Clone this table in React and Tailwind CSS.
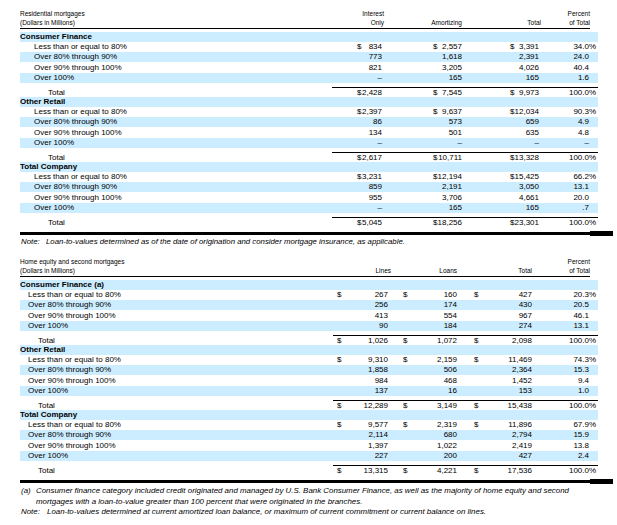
const font = "font-['Liberation_Sans',Arial,sans-serif]";

const residential = {
  title: ["Residential mortgages", "(Dollars in Millions)"],
  labelW: "w-[312px]",
  rowIndent: "pl-[14px]",
  totalIndent: "pl-[28px]",
  heads: [
    { cls: "w-[312px]", lines: [] },
    { cls: "w-[52px]", lines: ["Interest", "Only"] },
    { cls: "w-[78px]", lines: ["Amortizing"] },
    { cls: "w-[79px]", lines: ["Total"] },
    { cls: "w-[49px]", lines: ["Percent", "of Total"] },
  ],
  cols: ["w-[50px] pl-[25px]", "w-[80px] pl-[51px]", "w-[77px] pl-[48px]"],
  pctW: "w-[50px]",
  sections: [
    {
      name: "Consumer Finance",
      rows: [
        ["Less than or equal to 80%", "834", "2,557", "3,391", "34.0"],
        ["Over 80% through 90%", "773", "1,618", "2,391", "24.0"],
        ["Over 90% through 100%", "821", "3,205", "4,026", "40.4"],
        ["Over 100%", "–", "165", "165", "1.6"],
      ],
      total: ["2,428", "7,545", "9,973", "100.0"],
    },
    {
      name: "Other Retail",
      rows: [
        ["Less than or equal to 80%", "2,397", "9,637", "12,034", "90.3"],
        ["Over 80% through 90%", "86", "573", "659", "4.9"],
        ["Over 90% through 100%", "134", "501", "635", "4.8"],
        ["Over 100%", "–", "–", "–", "–"],
      ],
      total: ["2,617", "10,711", "13,328", "100.0"],
    },
    {
      name: "Total Company",
      rows: [
        ["Less than or equal to 80%", "3,231", "12,194", "15,425", "66.2"],
        ["Over 80% through 90%", "859", "2,191", "3,050", "13.1"],
        ["Over 90% through 100%", "955", "3,706", "4,661", "20.0"],
        ["Over 100%", "–", "165", "165", ".7"],
      ],
      total: ["5,045", "18,256", "23,301", "100.0"],
    },
  ],
};

const homeEquity = {
  title: ["Home equity and second mortgages", "(Dollars in Millions)"],
  labelW: "w-[313px]",
  rowIndent: "pl-[8px]",
  totalIndent: "pl-[18px]",
  heads: [
    { cls: "w-[313px]", lines: [] },
    { cls: "w-[58px]", lines: ["Lines"] },
    { cls: "w-[66px]", lines: ["Loans"] },
    { cls: "w-[75px]", lines: ["Total"] },
    { cls: "w-[58px]", lines: ["Percent", "of Total"] },
  ],
  cols: ["w-[55px] pl-[4px]", "w-[69px] pl-[15px]", "w-[75px] pl-[17px]"],
  pctW: "w-[57px]",
  sections: [
    {
      name: "Consumer Finance (a)",
      rows: [
        ["Less than or equal to 80%", "267", "160", "427", "20.3"],
        ["Over 80% through 90%", "256", "174", "430", "20.5"],
        ["Over 90% through 100%", "413", "554", "967", "46.1"],
        ["Over 100%", "90", "184", "274", "13.1"],
      ],
      total: ["1,026", "1,072", "2,098", "100.0"],
    },
    {
      name: "Other Retail",
      rows: [
        ["Less than or equal to 80%", "9,310", "2,159", "11,469", "74.3"],
        ["Over 80% through 90%", "1,858", "506", "2,364", "15.3"],
        ["Over 90% through 100%", "984", "468", "1,452", "9.4"],
        ["Over 100%", "137", "16", "153", "1.0"],
      ],
      total: ["12,289", "3,149", "15,438", "100.0"],
    },
    {
      name: "Total Company",
      rows: [
        ["Less than or equal to 80%", "9,577", "2,319", "11,896", "67.9"],
        ["Over 80% through 90%", "2,114", "680", "2,794", "15.9"],
        ["Over 90% through 100%", "1,397", "1,022", "2,419", "13.8"],
        ["Over 100%", "227", "200", "427", "2.4"],
      ],
      total: ["13,315", "4,221", "17,536", "100.0"],
    },
  ],
};

// heights of the four detail rows in each section
const rowH = ["h-[10px]", "h-[10px]", "h-[11px]", "h-[10px]"];

const Values = ({ table, vals, dollar }) => (
  <>
    {vals.slice(0, 3).map((v, i) => (
      <div key={i} className={`flex justify-between ${table.cols[i]}`}>
        <span>{dollar ? "$" : ""}</span>
        <span>{v}</span>
      </div>
    ))}
    <div className={`text-right ${table.pctW}`}>{vals[3]}</div>
    <div className="w-[9px]">{dollar ? "%" : ""}</div>
  </>
);

const Section = ({ table, section }) => (
  <div>
    <div className="flex h-[10px] w-[578px] items-center bg-[#ccecff] font-bold leading-[10px]">
      {section.name}
    </div>
    {section.rows.map((r, i) => (
      <div
        key={i}
        className={`flex w-[578px] items-center leading-[10px] ${rowH[i]} ${
          i % 2 === 1 ? "bg-[#ccecff]" : ""
        }`}
      >
        <div className={`${table.labelW} ${table.rowIndent}`}>{r[0]}</div>
        <Values table={table} vals={r.slice(1)} dollar={i === 0} />
      </div>
    ))}
    <div className="flex h-[14px] pt-[4px]">
      <div className={`${table.labelW} ${table.totalIndent} pt-[1px] leading-[9px]`}>
        Total
      </div>
      <div className="flex border-t border-black leading-[9px]">
        <Values table={table} vals={section.total} dollar />
      </div>
    </div>
  </div>
);

const Table = ({ table }) => (
  <div>
    <div className="flex w-[570px] items-end border-b border-black pb-[1px] text-[6.5px] leading-[8.5px]">
      {table.heads.map((h, i) => (
        <div key={i} className={`${h.cls} ${i === 0 ? "" : "text-right"}`}>
          {i === 0
            ? table.title.map((t) => <div key={t}>{t}</div>)
            : h.lines.map((t) => <div key={t}>{t}</div>)}
        </div>
      ))}
    </div>
    <div className="mt-[3px] text-[8px]">
      {table.sections.map((s, i) => (
        <Section key={i} table={table} section={s} />
      ))}
    </div>
    <div className="mt-[4px] flex items-center">
      <div className="h-[3px] w-[570px] bg-black" />
      <div className="h-[5px] w-[23px] bg-black" />
    </div>
  </div>
);

export default function App() {
  return (
    <div className={`min-h-[525px] w-[617px] bg-white pl-[20px] pt-[10px] text-black ${font}`}>
      <Table table={residential} />
      <div className="mt-[2px] flex whitespace-nowrap text-[7.8px] italic leading-[8px]">
        <div className="w-[26px] pl-[1px]">Note:</div>
        <div>
          Loan-to-values determined as of the date of origination and consider mortgage insurance,
          as applicable.
        </div>
      </div>

      <div className="mt-[12px]">
        <Table table={homeEquity} />
      </div>
      <div className="mt-[2px] whitespace-nowrap text-[7.9px] italic leading-[10.5px]">
        <div className="flex">
          <div className="w-[16px] pl-[1px]">(a)</div>
          <div>
            <div>
              Consumer finance category included credit originated and managed by U.S. Bank
              Consumer Finance, as well as the majority of home equity and second
            </div>
            <div>
              mortgages with a loan-to-value greater than 100 percent that were originated in the
              branches.
            </div>
          </div>
        </div>
        <div className="flex">
          <div className="w-[27px] pl-[1px]">Note:</div>
          <div>
            Loan-to-values determined at current amortized loan balance, or maximum of current
            commitment or current balance on lines.
          </div>
        </div>
      </div>
    </div>
  );
}
